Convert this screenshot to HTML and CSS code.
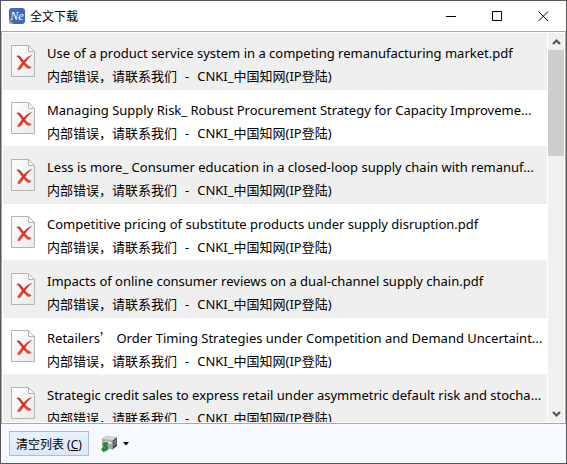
FILE: index.html
```html
<!DOCTYPE html>
<html lang="zh-CN">
<head>
  <meta charset="utf-8">
  <title>全文下载</title>
  <link rel="stylesheet" href="styles.css">
</head>
<body>
  <svg class="defs" width="0" height="0">
    <defs>
      <linearGradient id="paper" x1="0" y1="0" x2="1" y2="1">
        <stop offset="0" stop-color="#ffffff"/>
        <stop offset="1" stop-color="#e9e9e9"/>
      </linearGradient>
      <linearGradient id="red" x1="0" y1="0" x2="0" y2="1">
        <stop offset="0" stop-color="#c93a2c"/>
        <stop offset=".5" stop-color="#d8301f"/>
        <stop offset="1" stop-color="#e2604f"/>
      </linearGradient>
      <symbol id="file-error" viewBox="0 0 26 33">
        <path d="M1.500.5h17l6 6v25h-23z" fill="url(#paper)" stroke="#b5b5b5"/>
        <path d="M18.500.5v6h6z" fill="#fafafa" stroke="#b5b5b5"/>
        <path d="M6.300 11.200C8 10 9.800 10.600 11 12.300L13.800 15.800C16 12.800 19 10.800 22.500 10C19.500 12.300 17.200 14.800 15.200 17.700C17.200 20 19.300 21 21.500 22.200C20.500 23.800 18.500 24.200 17 23.200C15.700 22.200 14.700 21 13.700 19.800C12 22.300 11 25 9 25.200C7.500 25.200 7 24 7.800 23C9 21.200 10.500 19.400 12 17.600C10.300 15.300 9.200 12.800 6.300 11.200z" fill="url(#red)"/>
      </symbol>
    </defs>
  </svg>

  <div class="window">
    <header class="titlebar">
      <svg class="logo" width="16" height="16" viewBox="0 0 16 16">
        <rect width="16" height="16" rx="3" fill="#3f6cb5"/>
        <path d="M0 11.500L4.500 16H3Q0 16 0 13z" fill="#f0a23a"/>
        <text class="logo-text" x="8" y="12" text-anchor="middle">Ne</text>
      </svg>
      <h1 class="title">全文下载</h1>
      <button class="win-button" aria-label="Minimize">
        <svg width="11" height="11"><path d="M0 5.500h10" stroke="#000"/></svg>
      </button>
      <button class="win-button" aria-label="Maximize">
        <svg width="11" height="11"><path d="M.5.5h9v9h-9z" fill="none" stroke="#000"/></svg>
      </button>
      <button class="win-button" aria-label="Close">
        <svg width="11" height="11"><path d="M.5.5l9.500 9.500M10 .5L.5 10" stroke="#000"/></svg>
      </button>
    </header>

    <main class="panel">
      <ul class="list">
        <li class="item">
          <svg class="file-icon"><use href="#file-error"/></svg>
          <div class="info">
            <p class="name">Use of a product service system in a competing remanufacturing market.pdf</p>
            <p class="status">内部错误，请联系我们<span class="dash">-</span>CNKI_中国知网(IP登陆)</p>
          </div>
        </li>
        <li class="item">
          <svg class="file-icon"><use href="#file-error"/></svg>
          <div class="info">
            <p class="name">Managing Supply Risk_ Robust Procurement Strategy for Capacity Improveme...</p>
            <p class="status">内部错误，请联系我们<span class="dash">-</span>CNKI_中国知网(IP登陆)</p>
          </div>
        </li>
        <li class="item">
          <svg class="file-icon"><use href="#file-error"/></svg>
          <div class="info">
            <p class="name">Less is more_ Consumer education in a closed-loop supply chain with remanuf...</p>
            <p class="status">内部错误，请联系我们<span class="dash">-</span>CNKI_中国知网(IP登陆)</p>
          </div>
        </li>
        <li class="item">
          <svg class="file-icon"><use href="#file-error"/></svg>
          <div class="info">
            <p class="name">Competitive pricing of substitute products under supply disruption.pdf</p>
            <p class="status">内部错误，请联系我们<span class="dash">-</span>CNKI_中国知网(IP登陆)</p>
          </div>
        </li>
        <li class="item">
          <svg class="file-icon"><use href="#file-error"/></svg>
          <div class="info">
            <p class="name">Impacts of online consumer reviews on a dual-channel supply chain.pdf</p>
            <p class="status">内部错误，请联系我们<span class="dash">-</span>CNKI_中国知网(IP登陆)</p>
          </div>
        </li>
        <li class="item">
          <svg class="file-icon"><use href="#file-error"/></svg>
          <div class="info">
            <p class="name">Retailers<span class="wide">’</span> Order Timing Strategies under Competition and Demand Uncertaint...</p>
            <p class="status">内部错误，请联系我们<span class="dash">-</span>CNKI_中国知网(IP登陆)</p>
          </div>
        </li>
        <li class="item">
          <svg class="file-icon"><use href="#file-error"/></svg>
          <div class="info">
            <p class="name">Strategic credit sales to express retail under asymmetric default risk and stocha...</p>
            <p class="status">内部错误，请联系我们<span class="dash">-</span>CNKI_中国知网(IP登陆)</p>
          </div>
        </li>
      </ul>
      <div class="scrollbar">
        <button class="scroll-button" aria-label="Scroll up">
          <svg width="9" height="6"><path d="M1 5l3.500-3.500L8 5" fill="none" stroke="#505050" stroke-width="2"/></svg>
        </button>
        <div class="track"><div class="thumb"></div></div>
        <button class="scroll-button" aria-label="Scroll down">
          <svg width="9" height="6"><path d="M1 1l3.500 3.500L8 1" fill="none" stroke="#505050" stroke-width="2"/></svg>
        </button>
      </div>
    </main>

    <footer class="toolbar">
      <button class="clear-button">清空列表 (<u>C</u>)</button>
      <button class="menu-button" aria-label="Download options">
        <svg width="18" height="18" viewBox="0 0 18 18">
          <path d="M1 4L5 1.500L16 2.500L12 5.500z" fill="#dcdcdc" stroke="#a5a5a5" stroke-width=".6"/>
          <path d="M1 4L11.500 5.500V14.500L1 12.500z" fill="#a8a8a8"/>
          <path d="M11.500 5.500L16 2.500V11L11.500 14.500z" fill="#4c4c4c"/>
          <path d="M4 6L10.500 7V9L4 8z" fill="#e8e8e8"/>
          <path d="M12.300 7.500L15.500 5.300M12.300 10L15.500 7.700" stroke="#aaa"/>
          <path d="M6.500 7.500C2.500 6.800 1 9.500 3.300 11.200C5 12.300 4.500 13.800 3 13.500L3 11.700L.3 14.500L3 17.300V15.900C7.500 16.500 8.300 12.500 5.300 10.500C4.500 9.800 5 9.300 6.500 9.600z" fill="#14962a" stroke="#08661a" stroke-width=".5"/>
        </svg>
        <svg width="7" height="4"><path d="M0 0h6L3 3.500z" fill="#000"/></svg>
      </button>
    </footer>
  </div>
</body>
</html>
```
FILE: styles.css
```css
* {
  box-sizing: border-box;
}

body {
  margin: 0;
  font-family: "Noto Sans", "Noto Sans CJK SC", sans-serif;
  font-size: 13px;
  color: #000;
}

button {
  padding: 0;
  border: 0;
  background: none;
  font: inherit;
  color: inherit;
}

.defs {
  position: absolute;
}

.window {
  display: flex;
  flex-direction: column;
  height: 100vh;
  border: 1px solid #55565e;
  background-color: #f6f9ff;
}

.titlebar {
  display: flex;
  align-items: center;
  height: 30px;
  padding-left: 8px;
  background-color: #fff;
}

.logo-text {
  font-family: "Liberation Serif", serif;
  font-size: 12px;
  font-style: italic;
  fill: #fff;
}

.title {
  flex: 1;
  margin: 0 0 0 5px;
  font-size: 12px;
  font-weight: normal;
}

.win-button {
  display: flex;
  align-items: center;
  justify-content: center;
  width: 46px;
  height: 30px;
}

.panel {
  display: flex;
  flex: 1;
  min-height: 0;
  border: 1px solid #a5a8ad;
  background-color: #fff;
  padding: 1px;
}

.list {
  flex: 1;
  min-width: 0;
  margin: 0 1px 0 0;
  padding: 0;
  overflow: hidden;
  list-style: none;
}

.item {
  display: flex;
  height: 57px;
  padding: 9px 0 0 9px;
  border-bottom: 1px dotted #e6e6e6;
}

.item:nth-child(odd) {
  background-color: #efefef;
}

.file-icon {
  flex: none;
  width: 26px;
  height: 33px;
  margin: 3px 0 0 -2px;
}

.info {
  flex: 1;
  min-width: 0;
  margin-left: 11px;
}

.name,
.status {
  margin: 0;
  line-height: 23px;
  white-space: nowrap;
}

.wide {
  font-family: "Noto Sans CJK SC", sans-serif;
  line-height: 1;
}

.dash {
  margin: 0 8px;
}

.scrollbar {
  display: flex;
  flex-direction: column;
  width: 16px;
  background-color: #f0f0f0;
}

.scroll-button {
  display: flex;
  align-items: center;
  justify-content: center;
  height: 17px;
}

.track {
  flex: 1;
}

.thumb {
  height: 106px;
  background-color: #cdcdcd;
}

.toolbar {
  display: flex;
  align-items: center;
  gap: 12px;
  height: 39px;
  padding-left: 8px;
}

.clear-button {
  height: 25px;
  padding: 0 6px;
  border: 1px solid #a3bde3;
  background-image: linear-gradient(#eaf1fd, #dbe7fa);
  font-size: 12px;
}

.menu-button {
  display: flex;
  align-items: center;
  gap: 4px;
}
```
